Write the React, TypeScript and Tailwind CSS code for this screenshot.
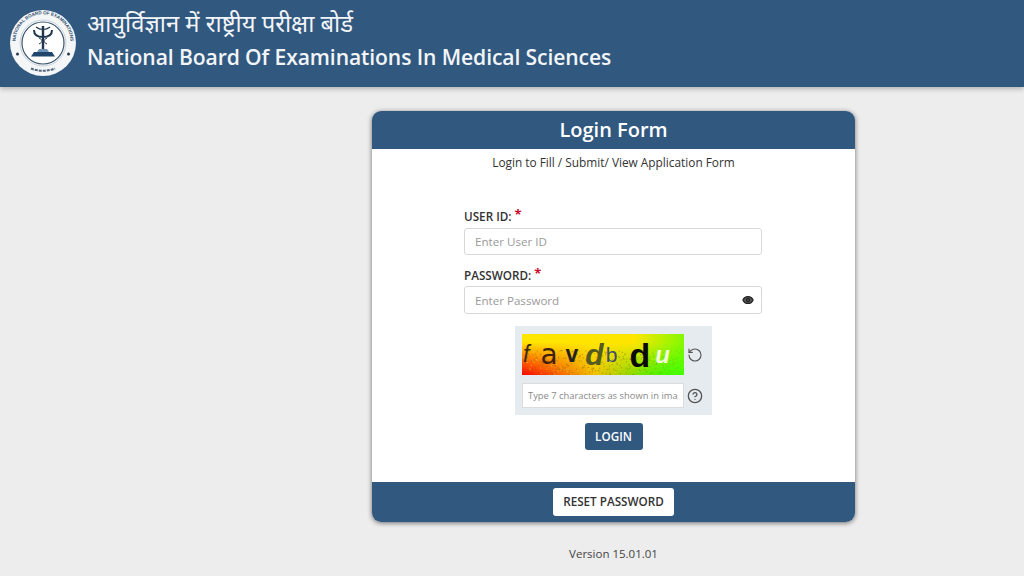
import { Eye, RotateCw, CircleHelp } from "lucide-react";

const NOISE = Array.from({ length: 420 }, (_, i) => {
  const x = (i * 73.13) % 162;
  const y = 16 + ((i * i * 0.37 + i * 11.7) % 25);
  return { x, y, dark: i % 3 !== 0 };
});

function Logo() {
  return (
    <svg viewBox="0 0 66 66" className="h-[66px] w-[66px] shrink-0">
      <circle cx="33" cy="33" r="33" fill="#f4f6f8" />
      <circle cx="33" cy="33" r="21" fill="#fff" stroke="#3a5670" strokeWidth="1.2" />
      <circle cx="33" cy="33" r="23" fill="none" stroke="#9fb0be" strokeWidth="0.5" />
      <defs>
        <path id="logo-arc" d="M7.5 42a27.500 27.500 0 1 1 51 0" />
      </defs>
      <text fontSize="4.600" fontWeight="700" fill="#2f4d6b" fontFamily="'Liberation Sans', sans-serif">
        <textPath href="#logo-arc" startOffset="50%" textAnchor="middle">
          NATIONAL BOARD OF EXAMINATIONS
        </textPath>
      </text>
      <path d="M24 20c0 5.500 4 7 9 7s9-1.500 9-7" fill="none" stroke="#20364d" strokeWidth="2" />
      <path d="M26 17c3 2.500 4.500 2.500 7 2.500s4 0 7-2.500" fill="none" stroke="#20364d" strokeWidth="1.200" />
      <path d="M33 16v23" stroke="#20364d" strokeWidth="2.400" />
      <path d="M29 28c4 2 4 4 0 6M37 28c-4 2-4 4 0 6" fill="none" stroke="#20364d" strokeWidth="1" />
      <path d="M29 39h8l2 3H27z" fill="#6f93b5" />
      <path d="M24 42h18l3 4.500H21z" fill="#20466c" />
      <circle cx="7.500" cy="44" r="1.500" fill="#27394b" />
      <circle cx="58.500" cy="44" r="1.500" fill="#27394b" />
      <path d="M21 58.500c7 3 17 3 24 0" fill="none" stroke="#52687c" strokeWidth="2" strokeDasharray="3 1" />
    </svg>
  );
}

function Label({ text }: { text: string }) {
  return (
    <label className="block text-[11.700px] leading-[16px] font-semibold text-[#333]">
      {text} <span className="relative -top-[2px] text-[13px] font-bold text-[#c8102e]">*</span>
    </label>
  );
}

function Captcha() {
  return (
    <div className="relative h-[41px] w-[162px] overflow-hidden bg-[linear-gradient(to_top,transparent,#ffe600_80%),linear-gradient(to_right,#ff0000,#eec000_45%,#00ff00)] font-['Liberation_Sans',sans-serif]">
      <svg viewBox="0 0 162 41" className="absolute inset-0 h-full w-full">
        {NOISE.map((d, i) => (
          <rect key={i} x={d.x} y={d.y} width="1" height="1" fill={d.dark ? "#7a5a10" : "#e8f060"} opacity="0.5" />
        ))}
      </svg>
      <div className="absolute top-0 right-0 bottom-0 w-[50px] bg-[linear-gradient(to_right,transparent,rgba(90,255,0,0.75))]" />
      <div className="relative flex h-full items-center">
        <span className="ml-[1px] text-[23px] text-[#3a2a10] italic">f</span>
        <span className="ml-[11px] font-['DejaVu_Sans',sans-serif] text-[28px] text-[#40200c]">a</span>
        <span className="ml-[8px] text-[23px] font-bold text-[#222]">v</span>
        <span className="ml-[7px] text-[30px] font-bold text-[#555a20] italic">d</span>
        <span className="ml-[2px] text-[21px] text-[#3f4f6a]">b</span>
        <span className="ml-[12px] text-[34px] leading-[34px] font-bold text-[#0b0b05]">d</span>
        <span className="ml-[5px] text-[24px] font-bold text-[#f4f8dc] italic">u</span>
      </div>
    </div>
  );
}

export default function App() {
  return (
    <div className="flex min-h-[576px] flex-col overflow-hidden bg-[#ededed] font-['Open_Sans',sans-serif]">
      <header className="flex h-[87px] shrink-0 items-center gap-[11px] bg-[#31587f] pb-[1px] pl-[10px] shadow-[0_2px_5px_rgba(0,0,0,0.25)]">
        <Logo />
        <div className="pb-[9px] text-[#f2f5f8]">
          <div className="text-[23.800px] leading-[36px] font-['Noto_Sans','Noto_Sans_Devanagari','Lohit_Devanagari',sans-serif]">
            आयुर्विज्ञान में राष्ट्रीय परीक्षा बोर्ड
          </div>
          <div className="text-[21.100px] leading-[32px] font-semibold tracking-[-0.1px]">
            National Board Of Examinations In Medical Sciences
          </div>
        </div>
      </header>

      <main className="ml-[372px] w-[483px]">
        <div className="mt-[24px] overflow-hidden rounded-[9px] bg-white shadow-[0_1px_5px_rgba(0,0,0,0.55)]">
          <div className="h-[38px] bg-[#31587f] text-center text-[20px] leading-[38px] font-semibold text-white">
            Login Form
          </div>
          <div className="flex h-[333px] flex-col items-center">
            <p className="mt-[4px] text-[11.850px] leading-[18px] text-[#333]">
              Login to Fill / Submit/ View Application Form
            </p>
            <div className="mt-[37px] mr-[1px] w-[298px]">
              <Label text="USER ID:" />
              <input
                placeholder="Enter User ID"
                className="mt-[4px] block h-[27px] w-full rounded-[3px] border border-[#d8d8d8] px-[10px] text-[11.600px] placeholder:text-[#9a9a9a]"
              />
              <div className="mt-[12px]">
                <Label text="PASSWORD:" />
              </div>
              <div className="relative mt-[3px]">
                <input
                  placeholder="Enter Password"
                  className="block h-[28px] w-full rounded-[3px] border border-[#d8d8d8] px-[10px] text-[11.600px] placeholder:text-[#9a9a9a]"
                />
                <Eye className="absolute top-[8px] right-[8px] h-[12px] w-[12px] fill-[#555] text-[#222]" strokeWidth={2.5} />
              </div>
            </div>
            <div className="mt-[12px] w-[197px] bg-[#e6ebef] px-[7px] pt-[8px] pb-[7px]">
              <div className="flex items-center gap-[3px]">
                <Captcha />
                <RotateCw className="h-[16px] w-[16px] -scale-x-100 text-[#555]" strokeWidth={1.7} />
              </div>
              <div className="mt-[8px] flex items-center gap-[3px]">
                <input
                  readOnly
                  placeholder="Type 7 characters as shown in image"
                  className="h-[25px] w-[162px] border border-[#dcdcdc] bg-white px-[5px] text-[9.400px] placeholder:text-[#8a8a8a]"
                />
                <CircleHelp className="h-[16px] w-[16px] text-[#555]" strokeWidth={2} />
              </div>
            </div>
            <button className="mt-[8px] h-[27px] w-[58px] rounded-[3px] bg-[#31587f] text-[11.700px] font-semibold text-white">
              LOGIN
            </button>
          </div>
          <div className="flex h-[40px] items-start justify-center bg-[#31587f] pt-[6px]">
            <button className="h-[28px] w-[121px] rounded-[3px] bg-white text-[11.700px] font-semibold text-[#333]">
              RESET PASSWORD
            </button>
          </div>
        </div>
        <p className="mt-[23px] text-center text-[11.500px] leading-[18px] text-[#444]">Version 15.01.01</p>
      </main>
    </div>
  );
}
